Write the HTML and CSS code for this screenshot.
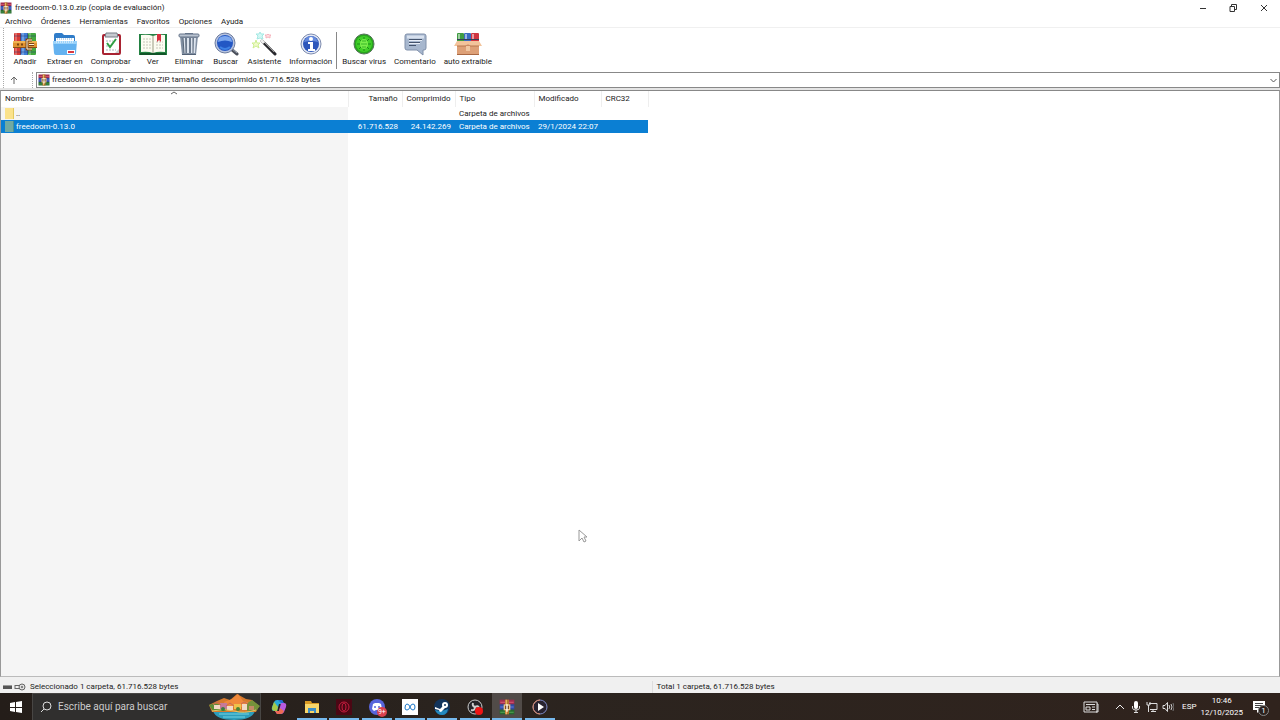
FILE: index.html
```html
<!DOCTYPE html>
<html lang="es">
<head>
    <meta charset="UTF-8">
    <meta name="viewport" content="width=device-width, initial-scale=1.0">
    <title>freedoom-0.13.0.zip (copia de evaluación)</title>
    <link rel="stylesheet" href="styles.css">
</head>
<body>

    <!-- Símbolos compartidos -->
    <svg class="symbols" aria-hidden="true">
        <symbol id="rar" viewBox="0 0 24 24">
            <path d="M1 1h22v7H1z" fill="#a02c50"/>
            <path d="M2 4h20v2H2z" fill="#c9506c"/>
            <path d="M1 8h22v8H1z" fill="#334aa5"/>
            <path d="M2 11h20v2H2z" fill="#5872cc"/>
            <path d="M1 16h22v7H1z" fill="#27692f"/>
            <path d="M2 19h20v2H2z" fill="#48954a"/>
            <path d="M9 1h6v22H9z" fill="#b4752f"/>
            <path d="M10 1h2v22h-2z" fill="#e6b060"/>
            <path d="M7 8h10v9H7z" fill="#e9c58a"/>
            <path d="M9 10h6v5H9z" fill="#7b4a26"/>
            <path d="M11 8h2v11h-2z" fill="#fff"/>
        </symbol>
    </svg>

    <div class="window">
        <!-- Barra de título -->
        <header class="titlebar">
            <svg class="icon-small"><use href="#rar"/></svg>
            <h1 class="title">freedoom-0.13.0.zip (copia de evaluación)</h1>
            <div class="window-buttons">
                <button type="button" aria-label="Minimizar"><svg viewBox="0 0 10 10"><path d="M2 5.500h6" stroke="#333" fill="none"/></svg></button>
                <button type="button" aria-label="Restaurar"><svg viewBox="0 0 10 10"><path d="M2 3.500h4.500v5H2zM3.500 3.500v-2h5v5h-2" stroke="#333" fill="none"/></svg></button>
                <button type="button" aria-label="Cerrar"><svg viewBox="0 0 10 10"><path d="M2 2l6 6M8 2l-6 6" stroke="#333" fill="none"/></svg></button>
            </div>
        </header>

        <!-- Menú -->
        <nav class="menubar">
            <button type="button">Archivo</button>
            <button type="button">Órdenes</button>
            <button type="button">Herramientas</button>
            <button type="button">Favoritos</button>
            <button type="button">Opciones</button>
            <button type="button">Ayuda</button>
        </nav>

        <!-- Barra de herramientas -->
        <div class="toolbar">
            <button type="button" class="tool">
                <svg viewBox="0 0 28 24">
                    <rect x="3" y="1" width="7" height="22" rx="1" fill="#d93a35"/><rect x="10" y="1" width="7" height="22" rx="1" fill="#3f7fd8"/><rect x="17" y="1" width="8" height="22" rx="1" fill="#43a93f"/>
                    <path d="M5 1v22M12 1v22M19 1v22" stroke="#fff" stroke-opacity=".5"/><path d="M9.500 1v22M16.500 1v22" stroke="#233a70" stroke-opacity=".6"/>
                    <path d="M3 4h22M3 20h22" stroke="#233a70" stroke-opacity=".5"/>
                    <rect x="2" y="9" width="24" height="7" rx="1" fill="#e09331"/><path d="M2 10h24" stroke="#ffd271"/><path d="M2 15.500h24" stroke="#8a4f16"/>
                    <path d="M6 12.500h2M10 12.500h2" stroke="#7a4614" stroke-width="2"/>
                    <path d="M21 8h-5v9h5M18 12.500h5" stroke="#7b4215" stroke-width="3" fill="none"/><path d="M21 8h-5v9h5M18 12.500h5" stroke="#fff4d5" fill="none"/>
                </svg>
                <span>Añadir</span>
            </button>
            <button type="button" class="tool">
                <svg viewBox="0 0 28 24">
                    <path d="M3 3q0-2 2-2h6l2 2h9q2 0 2 2v8H3z" fill="#2f7cc9"/>
                    <path d="M5 6h18v7H5z" fill="#fff"/><path d="M6 7h16" stroke="#7faeda" stroke-dasharray="1 1"/>
                    <path d="M2 9h24l-1 12q0 2-2 2H5q-2 0-2-2z" fill="#64b2f0"/><path d="M2 9h24v3H2z" fill="#9ad2fa"/>
                    <path d="M5 10h17" stroke="#fff" stroke-dasharray="1 1"/><path d="M16 20h8" stroke="#fff" stroke-width="4"/><path d="M17 20h6" stroke="#d83a42" stroke-width="2"/>
                </svg>
                <span>Extraer en</span>
            </button>
            <button type="button" class="tool">
                <svg viewBox="0 0 28 24">
                    <rect x="5" y="2" width="19" height="21" rx="2" fill="#a92332"/><rect x="7" y="4" width="15" height="17" fill="#fff"/>
                    <path d="M9 1h11l1 4H8z" fill="#c6cad0" stroke="#777c86"/><path d="M9 9h7M9 14h6M9 18h10" stroke="#aab2bc" stroke-dasharray="2 1"/>
                    <path d="M10 11l3 4 6-8" stroke="#2f9e43" stroke-width="2" fill="none"/><path d="M18 21l4-4v4z" fill="#ccc"/>
                </svg>
                <span>Comprobar</span>
            </button>
            <button type="button" class="tool">
                <svg viewBox="0 0 28 24">
                    <path d="M0 2h28v21H0z" fill="#238142"/><path d="M1 22h26" stroke="#125528" stroke-width="2"/>
                    <path d="M2 3q7-1 12 1 5-2 12-1v17q-7-1-12 1-5-2-12-1z" fill="#fcfcf1"/><path d="M14 4v17" stroke="#999b83"/>
                    <path d="M4 7h8M4 10h8M4 13h8M4 16h8M17 10h7M17 13h7M17 16h7" stroke="#c6c6b8" stroke-dasharray="2 1"/>
                    <path d="M18 2h4v8l-2-2-2 2z" fill="#d73040"/>
                </svg>
                <span>Ver</span>
            </button>
            <button type="button" class="tool">
                <svg viewBox="0 0 28 24">
                    <path d="M5 4h18l-2 19H7z" fill="#8290a3"/><path d="M9 6l1 15M13 6v15M17 6v15M20 6l-1 15" stroke="#dde4ee" stroke-width="2" fill="none"/>
                    <path d="M8 6l1 15M11 6v15M15 6v15M18 6v15" stroke="#586779" fill="none"/>
                    <rect x="4" y="2" width="20" height="3" rx="1" fill="#b9c3d0" stroke="#66758a"/><path d="M10 1.500h8" stroke="#66758a"/><path d="M7 22.500h14" stroke="#536277"/>
                </svg>
                <span>Eliminar</span>
            </button>
            <button type="button" class="tool">
                <svg viewBox="0 0 28 24">
                    <path d="M19 17l6 5" stroke="#4a4f5a" stroke-width="3" stroke-linecap="round"/><path d="M19 16l6 5" stroke="#9ba4b3"/>
                    <circle cx="13" cy="11" r="10" fill="#b7c3de" stroke="#6c7c9f"/><circle cx="13" cy="11" r="8" fill="#2357c4"/>
                    <path d="M6 10q0-6 7-6t7 6q-7-3-14 0z" fill="#7da8ef"/><path d="M8 15q5 4 10 0" stroke="#3f82e4" stroke-width="2" fill="none"/>
                </svg>
                <span>Buscar</span>
            </button>
            <button type="button" class="tool">
                <svg viewBox="0 0 28 24">
                    <path d="M12 9l13 13" stroke="#29292e" stroke-width="3" stroke-linecap="round"/><path d="M12 8l12 12" stroke="#999"/><path d="M11 8l3 3" stroke="#eee" stroke-width="3"/>
                    <path d="M6 8l1 3 3 0-2 2 1 3-3-2-3 2 1-3-2-2h3z" fill="#f0fbc9" stroke="#cdee92"/>
                    <path d="M10 0l1 2 3 0-2 2 1 3-3-1-3 1 1-3-2-2h3z" fill="#d3f8f5" stroke="#a5e8e3"/>
                    <path d="M18 2l1 1h2l-1 1v2l-2-1-2 1v-2l-1-1h2z" fill="#ffe0e2" stroke="#f6b5be"/>
                </svg>
                <span>Asistente</span>
            </button>
            <button type="button" class="tool">
                <svg viewBox="0 0 28 24">
                    <circle cx="14" cy="12" r="10" fill="#e4e9f5" stroke="#7e8caf" stroke-width="1"/><circle cx="14" cy="12" r="8" fill="#2d56bb"/>
                    <path d="M7 10q2-6 7-6t7 6q-7-2-14 0z" fill="#668bdd"/><circle cx="14" cy="7" r="2" fill="#fff"/><path d="M11 10h5v7h2v2h-7v-2h2v-5h-2z" fill="#fff"/>
                </svg>
                <span>Información</span>
            </button>
            <div class="separator"></div>
            <button type="button" class="tool">
                <svg viewBox="0 0 28 24">
                    <circle cx="14" cy="12" r="10" fill="#28a51e" stroke="#55735a" stroke-width="1"/><circle cx="14" cy="12" r="8" fill="#40cf28"/>
                    <path d="M9 7l10 10M19 7L9 17M7 12h14M14 5v14" stroke="#1b8b19"/><ellipse cx="14" cy="12" rx="4" ry="5" fill="#7bed4c"/><path d="M12 9h4M11 12h6M12 15h4" stroke="#37b827"/>
                </svg>
                <span>Buscar virus</span>
            </button>
            <button type="button" class="tool">
                <svg viewBox="0 0 28 24">
                    <path d="M6 2h17q2 0 2 2v12q0 2-2 2h-1v5l-6-5H6q-2 0-2-2V4q0-2 2-2z" fill="#a7b7ce" stroke="#8090aa"/><path d="M6 3.500h17v3H6z" fill="#d7e0ee"/>
                    <path d="M8 7.500h13M8 10.500h11M8 13.500h7" stroke="#44536c"/><path d="M8 8.500h13M8 11.500h11" stroke="#e8eef7"/>
                </svg>
                <span>Comentario</span>
            </button>
            <button type="button" class="tool">
                <svg viewBox="0 0 28 24">
                    <rect x="3" y="1" width="7" height="11" rx="1" fill="#3f9c42"/><rect x="10" y="1" width="7" height="11" rx="1" fill="#386bc1"/><rect x="17" y="1" width="8" height="11" rx="1" fill="#cf3440"/>
                    <path d="M5 2v6M12 2v6M19 2v6" stroke="#fff" stroke-opacity=".5" stroke-width="2"/><path d="M3 7.500h22" stroke="#343f58"/>
                    <path d="M3 9h22v14H3z" fill="#dda077"/><path d="M3 9h22l3 5H17l-3-2-3 2H0z" fill="#f2c39b"/><path d="M3 14h22" stroke="#b9774e"/><path d="M3 22.500h22" stroke="#a96843"/><path d="M12 14h4v5h-4z" fill="#f0c7a2"/>
                </svg>
                <span>auto extraíble</span>
            </button>
        </div>

        <!-- Dirección -->
        <div class="addressbar">
            <button type="button" class="up" aria-label="Subir un nivel"><svg viewBox="0 0 8 8"><path d="M4 8V1M1 4l3-3 3 3" stroke="#666" fill="none"/></svg></button>
            <div class="address">
                <svg class="icon-small"><use href="#rar"/></svg>
                <input type="text" aria-label="Dirección" value="freedoom-0.13.0.zip - archivo ZIP, tamaño descomprimido 61.716.528 bytes">
                <button type="button" aria-label="Mostrar carpetas"><svg viewBox="0 0 8 8"><path d="M1 3l3 3 3-3" stroke="#555" fill="none"/></svg></button>
            </div>
        </div>

        <!-- Lista de archivos -->
        <main class="files">
            <table>
                <colgroup>
                    <col class="col-name"><col class="col-size"><col class="col-packed"><col class="col-type"><col class="col-date"><col class="col-crc">
                </colgroup>
                <thead>
                    <tr>
                        <th class="sorted">Nombre<svg viewBox="0 0 6 4"><path d="M0 3l3-2 3 2" stroke="#666" fill="none"/></svg></th>
                        <th class="num">Tamaño</th>
                        <th class="num">Comprimido</th>
                        <th>Tipo</th>
                        <th>Modificado</th>
                        <th>CRC32</th>
                    </tr>
                </thead>
                <tbody>
                    <tr>
                        <td><div class="name"><i class="folder"></i><span>..</span></div></td>
                        <td></td>
                        <td></td>
                        <td>Carpeta de archivos</td>
                        <td></td>
                        <td></td>
                    </tr>
                    <tr class="selected">
                        <td><div class="name"><i class="folder"></i><span>freedoom-0.13.0</span></div></td>
                        <td class="num">61.716.528</td>
                        <td class="num">24.142.269</td>
                        <td>Carpeta de archivos</td>
                        <td>29/1/2024 22:07</td>
                        <td></td>
                    </tr>
                </tbody>
            </table>
        </main>

        <!-- Barra de estado -->
        <footer class="statusbar">
            <div class="status">
                <svg class="status-icons" viewBox="0 0 24 10">
                    <path d="M1 3h9v4H1z" fill="#555"/><path d="M1 3.500h9" stroke="#999"/>
                    <path d="M13 3.500h6M13 6.500h6M13 3v4" stroke="#666" fill="none"/><circle cx="20" cy="5" r="3" fill="#ddd" stroke="#666"/><circle cx="20" cy="5" r="1" fill="#666"/>
                </svg>
                Seleccionado 1 carpeta, 61.716.528 bytes
            </div>
            <div class="status">Total 1 carpeta, 61.716.528 bytes</div>
        </footer>
    </div>

    <!-- Barra de tareas -->
    <div class="taskbar">
        <button type="button" class="start" aria-label="Inicio">
            <svg viewBox="0 0 12 12"><path d="M0 2l5-1v5H0zM6 1l6-1v6H6zM0 7h5v4l-5-1zM6 7h6v5l-6-1z" fill="#fff"/></svg>
        </button>
        <div class="search">
            <svg class="lens" viewBox="0 0 12 12"><circle cx="7" cy="5" r="4" stroke="#ddd" fill="none"/><path d="M4 8l-3 3" stroke="#ddd"/></svg>
            <input type="text" aria-label="Buscar" placeholder="Escribe aquí para buscar">
            <svg class="island" viewBox="0 0 52 26">
                <path d="M5 17h42q-3 9-21 9T5 17z" fill="#2c9dbb"/><path d="M11 20h30M15 23h22" stroke="#72d3e2"/>
                <path d="M1 11l8-4 7-3 6 2 7-6 9 5 6 1 7 6-3 6H4z" fill="#d77a2e"/>
                <path d="M16 8l8-3 6-5 5 7 8 2-9 4H18z" fill="#f0893b"/><path d="M1 11q7-3 11 0l8 1-2 5H5z" fill="#5c8e36"/><path d="M38 10l6-4 8 6-4 5h-9z" fill="#76913a"/>
                <path d="M6 11h6v4H6zM19 12h6v4h-6zM34 10h5v6h-5z" fill="#f3d9c4"/><path d="M12 9h7v6h-7z" fill="#c67a9a"/><path d="M26 10h7v5h-7z" fill="#efc14a"/>
                <path d="M5 11l4-3 4 3M18 12l4-3 4 3M33 10l3-2 4 2" stroke="#c66a58" stroke-width="1" fill="none"/><path d="M4 17q12-3 22 0t22-1" stroke="#e5c766" stroke-width="1" fill="none"/>
                <path d="M41 12h5v4h-5z" fill="#c58a66"/><circle cx="30" cy="15" r="2" fill="#4b8335"/><circle cx="15" cy="15" r="2" fill="#3e7b40"/>
            </svg>
        </div>
        <div class="apps">
            <button type="button" class="app" aria-label="Copilot">
                <svg viewBox="0 0 16 16"><path d="M6 1h5l2 4H8L6 12H3q-3 0-2-4l2-5q1-2 3-2z" fill="#29a9d6"/><path d="M3 3l-2 6q0 3 3 3h2l1-4z" fill="#a6c947"/><path d="M10 15H6l-2-3h4l2-8h3q3 0 2 4l-2 5q-1 2-3 2z" fill="#b75be0"/><path d="M6 15l-2-3h4l1-3 4 3q-1 3-3 3z" fill="#ed6b54"/><path d="M7 1h4l2 3h-3z" fill="#2468d2"/></svg>
            </button>
            <button type="button" class="app open" aria-label="Explorador de archivos">
                <svg viewBox="0 0 16 16"><path d="M1 2h6l1 2h7v10H1z" fill="#d99a24"/><path d="M1 5h14v9H1z" fill="#f8d76b"/><path d="M4 9h8v5h-2v-2H6v2H4z" fill="#3e8fc7"/></svg>
            </button>
            <button type="button" class="app open" aria-label="Opera GX">
                <svg viewBox="0 0 16 16"><path d="M0 0h16v16H0z" fill="#4b0714"/><circle cx="8" cy="8" r="5" fill="none" stroke="#c41c3e"/><ellipse cx="8" cy="8" rx="2" ry="4" fill="none" stroke="#c41c3e"/></svg>
            </button>
            <button type="button" class="app open" aria-label="Discord">
                <svg viewBox="0 0 16 16"><circle cx="8" cy="8" r="8" fill="#5865dc"/><path d="M4 5l2-1h4l2 1 1 5-2 2-2-1H7l-2 1-2-2z" fill="#fff"/><circle cx="6" cy="8" r="1" fill="#5865dc"/><circle cx="10" cy="8" r="1" fill="#5865dc"/></svg>
                <span class="badge">9+</span>
            </button>
            <button type="button" class="app open" aria-label="Meta">
                <svg viewBox="0 0 16 16"><path d="M0 0h16v16H0z" fill="#fff"/><path d="M3 9q0-4 2-4t3 3q1 3 3 3t2-3q0-3-2-3T8 8q-1 3-3 3T3 9" fill="none" stroke="#1976c9"/></svg>
            </button>
            <button type="button" class="app open" aria-label="Steam">
                <svg viewBox="0 0 16 16"><circle cx="8" cy="8" r="8" fill="#12345c"/><path d="M1 11q7 2 13-1-1 6-6 6-5 0-7-5z" fill="#2389be"/><path d="M1 8l5 2 4-4 2 2-5 5q-2 0-2-2L1 10z" fill="#fff"/><circle cx="11" cy="6" r="3" fill="#fff"/><circle cx="11" cy="6" r="1" fill="#12345c"/></svg>
            </button>
            <button type="button" class="app open" aria-label="OBS Studio">
                <svg viewBox="0 0 16 16"><circle cx="8" cy="8" r="7" fill="#242428" stroke="#ccc"/><path d="M8 8q-3-1-2-4M8 8q3-2 4 1M8 8q0 4-4 3" fill="none" stroke="#ccc" stroke-width="2"/><circle cx="12" cy="12" r="4" fill="#ee1515"/></svg>
            </button>
            <button type="button" class="app open active" aria-label="WinRAR">
                <svg><use href="#rar"/></svg>
            </button>
            <button type="button" class="app open" aria-label="Reproductor multimedia">
                <svg viewBox="0 0 16 16"><circle cx="8" cy="8" r="7" fill="#282330" stroke="#7c88c4"/><path d="M8 1a7 7 0 0 0 0 14" fill="none" stroke="#e08a61"/><path d="M6 4l6 4-6 4z" fill="#fff"/></svg>
            </button>
        </div>
        <div class="tray">
            <button type="button" class="news" aria-label="Noticias">
                <svg viewBox="0 0 16 12"><path d="M1 1h13v10H1zM14 3h1v8h-2" fill="none" stroke="#ddd"/><path d="M3 3.500h9M9 6h3M9 8.500h3" stroke="#ddd"/><path d="M3 6h4v3H3z" fill="none" stroke="#ddd"/></svg>
            </button>
            <button type="button" aria-label="Iconos ocultos"><svg viewBox="0 0 12 12"><path d="M2 8l4-4 4 4" fill="none" stroke="#eee"/></svg></button>
            <button type="button" aria-label="Micrófono"><svg viewBox="0 0 12 12"><rect x="4" y="0" width="4" height="8" rx="2" fill="#fff"/><path d="M2.500 5v2q0 2 3.500 2t3.500-2V5M6 9v3M4 11.500h4" fill="none" stroke="#ddd"/></svg></button>
            <button type="button" aria-label="Red"><svg viewBox="0 0 12 12"><path d="M3 2.500h8v6H4M7 8.500v2M5 10.500h5M1 1v3h3V1M2.500 4v7" fill="none" stroke="#ddd"/></svg></button>
            <button type="button" aria-label="Volumen"><svg viewBox="0 0 12 12"><path d="M1 4.500h2l2.500-3v9L3 7.500H1z" fill="none" stroke="#ddd"/><path d="M7 4q1.500 2 0 4M9 3q2 3 0 6" fill="none" stroke="#ccc"/><path d="M11 2q2 4 0 8" fill="none" stroke="#777"/></svg></button>
            <button type="button" class="lang">ESP</button>
            <button type="button" class="clock"><span>10:46</span><span>12/10/2025</span></button>
            <button type="button" class="notify" aria-label="Notificaciones">
                <svg viewBox="0 0 12 12"><path d="M0 0h12v9H7l-3 3V9H0z" fill="#fff"/><path d="M2 2.500h8M2 4.500h8M2 6.500h6" stroke="#444"/></svg>
                <span class="count">1</span>
            </button>
        </div>
    </div>

    <!-- Puntero -->
    <svg class="pointer" viewBox="0 0 10 14" aria-hidden="true"><path d="M1 1v11l3-3 2 4 2-1-2-4h3z" fill="#fff" stroke="#999"/></svg>

</body>
</html>
```
FILE: styles.css
```css
* {
    box-sizing: border-box;
}

body {
    margin: 0;
    height: 100vh;
    display: flex;
    flex-direction: column;
    font-family: Roboto, "Noto Sans", sans-serif;
    font-size: 8px;
    line-height: 12px;
    color: #222;
    background-color: #fff;
    overflow: hidden;
}

button, input {
    margin: 0;
    padding: 0;
    border: none;
    background: none;
    font: inherit;
    color: inherit;
    outline: none;
}

svg {
    display: block;
    flex: none;
}

.symbols {
    position: absolute;
    width: 0;
    height: 0;
}

.icon-small {
    width: 12px;
    height: 12px;
}

.window {
    flex: 1;
    min-height: 0;
    display: flex;
    flex-direction: column;
}

/* Barra de título */
.titlebar {
    display: flex;
    align-items: center;
    gap: 3px;
    height: 15px;
    flex: none;
}

.title {
    margin: 0;
    font-size: 8px;
    font-weight: normal;
}

.window-buttons {
    display: flex;
    margin-left: auto;
}

.window-buttons button {
    display: flex;
    justify-content: center;
    width: 30px;
}

.window-buttons button:last-child {
    width: 32px;
}

.window-buttons svg {
    width: 10px;
    height: 10px;
}

/* Menú */
.menubar {
    display: flex;
    gap: 9px;
    padding: 1px 5px 0;
    height: 13px;
    flex: none;
    border-bottom: 1px solid #f0f0f0;
}

/* Barra de herramientas */
.toolbar {
    display: flex;
    gap: 8px;
    margin-left: 3px;
    padding: 4px 8px 2px 7px;
    height: 43px;
    flex: none;
    border-left: 1px dotted #aaa;
}

.tool {
    display: flex;
    flex-direction: column;
    align-items: center;
    min-width: 28px;
    white-space: nowrap;
}

.tool svg {
    width: 28px;
    height: 24px;
}

.separator {
    width: 1px;
    margin: 0 -3px 0 -4px;
    background-color: #888;
}

/* Dirección */
.addressbar {
    display: flex;
    align-items: center;
    height: 17px;
    flex: none;
    margin-left: 3px;
    border-left: 1px dotted #aaa;
}

.up {
    display: flex;
    align-items: center;
    justify-content: center;
    width: 29px;
    height: 16px;
    padding-right: 8px;
    margin-right: 3px;
    border-right: 1px dotted #aaa;
}

.up svg {
    width: 8px;
    height: 8px;
}

.address {
    flex: 1;
    display: flex;
    align-items: center;
    gap: 2px;
    height: 16px;
    padding-left: 1px;
    border: 1px solid #888;
}

.address input {
    flex: 1;
    height: 12px;
}

.address button {
    padding-right: 1px;
}

.address button svg {
    width: 9px;
    height: 8px;
}

/* Lista de archivos */
.files {
    flex: 1;
    min-height: 0;
    margin-top: 2px;
    border: 1px solid #999;
    border-top: 1px solid #888;
    border-bottom: 1px solid #bbb;
    background: linear-gradient(#f5f5f5, #f5f5f5) 0 16px / 347px 100% no-repeat #fff;
    box-shadow: 0 -2px #e4e4e4;
}

table {
    width: 647px;
    table-layout: fixed;
    border-collapse: collapse;
}

.col-name {
    width: 347px;
}

.col-size {
    width: 54px;
}

.col-packed {
    width: 53px;
}

.col-type {
    width: 79px;
}

.col-date {
    width: 67px;
}

.col-crc {
    width: 47px;
}

th, td {
    padding: 0 4px;
    font-weight: normal;
    text-align: left;
    white-space: nowrap;
}

th {
    height: 16px;
    border-right: 1px solid #eee;
}

td {
    height: 13px;
}

.num {
    text-align: right;
}

.sorted {
    position: relative;
}

.sorted svg {
    position: absolute;
    top: 0;
    left: 50%;
    width: 6px;
    height: 4px;
    margin-left: -3px;
}

.name {
    display: flex;
    align-items: center;
    gap: 2px;
}

.folder {
    width: 9px;
    height: 11px;
    border-right: 1px solid #e3c95f;
    background-color: #fbe28b;
}

.selected {
    background-color: #0b7fd3;
    color: #fff;
}

.selected .folder {
    border-color: #4f928f;
    background-color: #72aaa2;
}

/* Barra de estado */
.statusbar {
    display: flex;
    height: 16px;
    padding-top: 3px;
    flex: none;
    background-color: #f0f0f0;
    align-items: center;
}

.status {
    flex: 1;
    display: flex;
    align-items: center;
    gap: 4px;
    padding-left: 2px;
}

.status + .status {
    padding-left: 4px;
    margin-left: 13px;
    margin-right: -13px;
    border-left: 1px solid #ddd;
}

.status-icons {
    width: 24px;
    height: 10px;
}

/* Barra de tareas */
.taskbar {
    display: flex;
    height: 27px;
    flex: none;
    background: linear-gradient(90deg, #241d19, #2b241f 40%, #30231d);
    color: #fff;
}

.start {
    display: flex;
    align-items: center;
    justify-content: center;
    width: 32px;
}

.start svg {
    width: 12px;
    height: 12px;
}

.search {
    display: flex;
    align-items: center;
    width: 229px;
    padding-left: 7px;
    border: 1px solid #484644;
    border-bottom: none;
    background-color: #302f2e;
}

.lens {
    width: 12px;
    height: 12px;
}

.search input {
    flex: 1;
    min-width: 0;
    padding-left: 6px;
    font-size: 10px;
}

.search input::placeholder {
    color: #ccc;
    opacity: 1;
}

.island {
    width: 52px;
    height: 26px;
}

.apps {
    display: flex;
    justify-content: space-between;
    width: 294px;
    padding-left: 3px;
}

.app {
    position: relative;
    display: flex;
    align-items: center;
    justify-content: center;
    width: 30px;
    padding-top: 2px;
    border-bottom: 2px solid transparent;
}

.app svg {
    width: 16px;
    height: 16px;
}

.open {
    border-color: #76b9ed;
}

.active {
    background-color: #514b48;
}

.badge {
    position: absolute;
    right: 5px;
    bottom: 1px;
    width: 10px;
    height: 10px;
    border-radius: 50%;
    background-color: #d9414e;
    font-size: 7px;
    line-height: 10px;
}

.tray {
    display: flex;
    align-items: center;
    gap: 4px;
    margin-left: auto;
    padding-right: 15px;
}

.tray svg {
    width: 12px;
    height: 12px;
}

.tray .news {
    margin-right: 11px;
}

.tray .news svg {
    width: 16px;
}

.lang {
    margin-left: 4px;
}

.clock {
    display: flex;
    flex-direction: column;
    align-items: center;
}

.notify {
    position: relative;
    margin-left: 6px;
}

.count {
    position: absolute;
    left: 5px;
    top: 4px;
    width: 11px;
    height: 11px;
    border: 1px solid #888;
    border-radius: 50%;
    background-color: #2b211d;
    line-height: 9px;
    text-align: center;
}

/* Puntero */
.pointer {
    position: absolute;
    left: 578px;
    top: 529px;
    width: 10px;
    height: 14px;
}
```
